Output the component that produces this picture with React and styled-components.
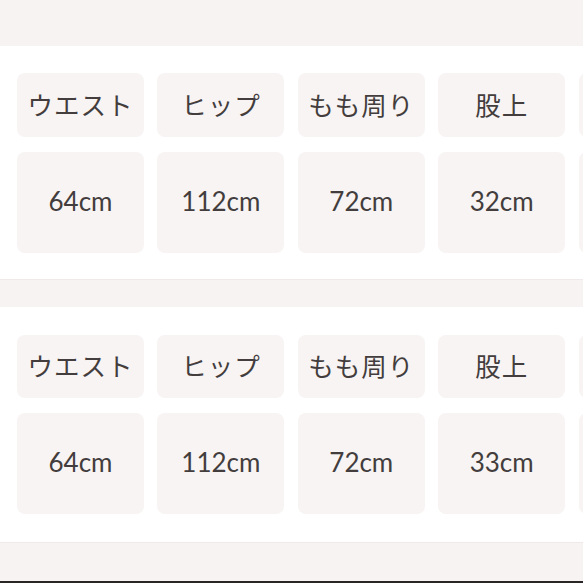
import React from "react";
import styled, { createGlobalStyle } from "styled-components";

const GlobalStyle = createGlobalStyle`
  html, body {
    margin: 0;
    padding: 0;
    background: #f7f3f2;
    overflow: hidden;
  }
`;

const Page = styled.div`
  width: 583px;
  height: 583px;
  padding-top: 46px;
  box-sizing: border-box;
  display: flex;
  flex-direction: column;
  gap: 27px;
  overflow: hidden;
  border-bottom: 2px solid #2a2626;
`;

const Panel = styled.section`
  background: #ffffff;
  padding: ${(p) => (p.$second ? "28px 0 28px 17px" : "27px 0 26px 17px")};
  border-bottom: 1px solid #efeae9;
  overflow: hidden;
`;

const Grid = styled.div`
  display: grid;
  grid-template-columns: repeat(5, 127px);
  grid-template-rows: ${(p) => (p.$second ? "63px 101px" : "64px 101px")};
  column-gap: 13.4px;
  row-gap: 15px;
`;

const Cell = styled.div`
  background: #f8f4f3;
  border-radius: 8px;
  display: flex;
  align-items: center;
  justify-content: center;
  box-sizing: border-box;
  padding-bottom: ${(p) => (p.$label ? "4px" : "3px")};
  color: #433d3d;
  font-family: Lato, "Noto Sans CJK JP", sans-serif;
  font-size: ${(p) => (p.$label ? "25.5px" : "26px")};
  letter-spacing: ${(p) => (p.$label ? "1px" : "0")};
  white-space: nowrap;
`;

// the fifth column runs off the right edge; its text is not visible
const tables = [
  { labels: ["ウエスト", "ヒップ", "もも周り", "股上", ""], values: ["64cm", "112cm", "72cm", "32cm", ""] },
  { labels: ["ウエスト", "ヒップ", "もも周り", "股上", ""], values: ["64cm", "112cm", "72cm", "33cm", ""] },
];

export default function App() {
  return (
    <>
      <GlobalStyle />
      <Page>
        {tables.map((t, i) => (
          <Panel key={i} $second={i === 1}>
            <Grid $second={i === 1}>
              {t.labels.map((l, j) => (
                <Cell key={"l" + j} $label>{l}</Cell>
              ))}
              {t.values.map((v, j) => (
                <Cell key={"v" + j}>{v}</Cell>
              ))}
            </Grid>
          </Panel>
        ))}
      </Page>
    </>
  );
}
